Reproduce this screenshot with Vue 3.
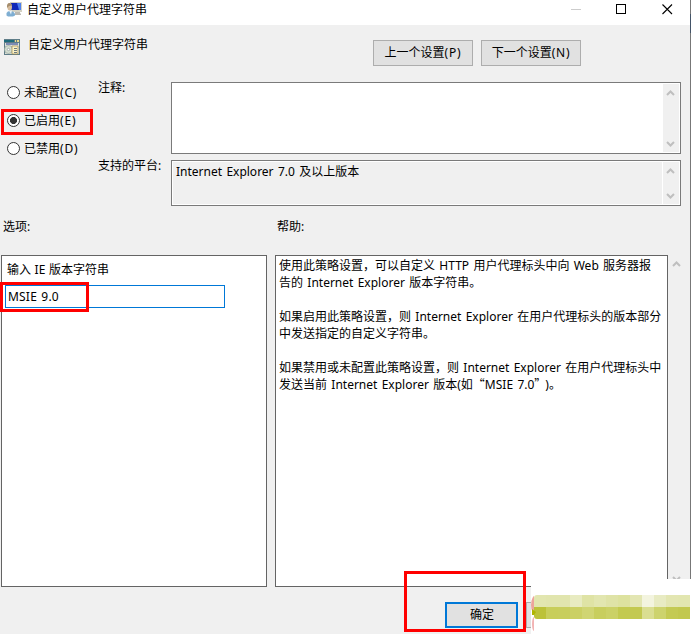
<script setup>
import { ref } from 'vue'

const state = ref('E')
const version = ref('MSIE 9.0')
const states = [
  { key: 'C', label: '未配置' },
  { key: 'E', label: '已启用' },
  { key: 'D', label: '已禁用' },
]
const help = [
  '使用此策略设置，可以自定义 HTTP 用户代理标头中向 Web 服务器报',
  '告的 Internet Explorer 版本字符串。',
  '',
  '如果启用此策略设置，则 Internet Explorer 在用户代理标头的版本部分',
  '中发送指定的自定义字符串。',
  '',
  '如果禁用或未配置此策略设置，则 Internet Explorer 在用户代理标头中',
]
const mosaicTop = ['#e2e6b0', '#e1e5ae', '#e1e5ae', '#e8ebc1', '#dfe3a5', '#e2e6b0', '#dfe3a7', '#dde29f', '#e3e6b3', '#f3f4df', '#e8ebc3', '#e3e6b2', '#e2e6b0']
const mosaicBottom = ['#bcc239', '#c8ce5b', '#c8ce5d', '#cbd064', '#d0d573', '#c8ce5e', '#cbd166', '#c3ca50', '#c3c951', '#dade91', '#cdd36d', '#c4ca53', '#c2c84e']
</script>

<template>
  <div class="window">
    <header class="titlebar">
      <svg class="app-icon" width="18" height="18" viewBox="0 0 18 18">
        <path d="M5 2h12v10H5z" fill="#d3d1c4" />
        <path d="M6 3h10v7H6z" fill="#1028b8" />
        <path d="M12 3h4v7h-2z" fill="#4d7ff0" />
        <path d="M10 12h5v1.500h1V15H9v-1h1z" fill="#b9b8b2" />
        <path d="M1.500 15.500V13q1-2 3.500-2 4 0 5 3v1.500l-2 1H3z" fill="#7faed2" />
        <path d="M4 10.500h3l-1 4z" fill="#e9f4fb" />
        <ellipse cx="4.700" cy="7" rx="2.300" ry="3.500" fill="#d5bb9c" />
        <path d="M2 8q-.5-5 2.500-5 2.500 0 2.500 2.500L4 6z" fill="#a58d6d" />
      </svg>
      <span class="title">自定义用户代理字符串</span>
      <svg class="controls" width="110" height="20" viewBox="0 0 110 20" fill="none" shape-rendering="crispEdges">
        <path d="M0 9.5h10" stroke="#ccc" />
        <rect x="45.5" y="4.5" width="9" height="9" stroke="#000" />
        <path d="M91.500 4.500l9.500 9.500m0-9.500l-9.500 9.500" stroke="#000" shape-rendering="auto" stroke-width="1.1" />
      </svg>
    </header>

    <section class="heading">
      <svg class="policy-icon" width="16" height="16" viewBox="0 0 16 16">
        <path d="M0 0h16v16H0z" fill="#5f7d88" />
        <path d="M1 4h14v11H1z" fill="#dfe1d8" />
        <path d="M0 1h10v2H0z" fill="#1d6b7c" />
        <path d="M11 1h1v2h-1zM13 1h2v2h-2z" fill="#e8d88a" />
        <path d="M2 4h12v2H2z" fill="#7c8cb4" />
        <circle cx="4.5" cy="10.5" r="4" fill="#d3ddd0" stroke="#8b9e98" stroke-width=".6" />
        <circle cx="4.5" cy="10.5" r="1.2" fill="#fff" stroke="#7e8b8b" stroke-width=".6" />
        <path d="M8 7h6v8H8z" fill="#fbf1c4" stroke="#a08a50" stroke-width=".7" />
        <path d="M10 9.500h3M10 11.500h3M10 13.500h3" stroke="#6d7b80" />
      </svg>
      <span class="policy-name">自定义用户代理字符串</span>
      <button class="btn">上一个设置<span class="key">(P)</span></button>
      <button class="btn">下一个设置<span class="key">(N)</span></button>
    </section>

    <section class="config">
      <div class="radios">
        <label v-for="s in states" :key="s.key" class="radio" @click="state = s.key">
          <i class="dot" :class="{ on: state === s.key }"></i>
          <span>{{ s.label }}<span class="key">({{ s.key }})</span></span>
        </label>
        <div class="mark mark-radio"></div>
      </div>
      <div class="labels">
        <span class="label-note">注释:</span>
        <span>支持的平台:</span>
      </div>
      <div class="fields">
        <div class="area note">
          <div class="scroll">
            <svg width="9" height="6" viewBox="0 0 9 6"><path d="M1 5l3.5-3.5L8 5" /></svg>
            <svg width="9" height="6" viewBox="0 0 9 6"><path d="M1 1l3.5 3.5L8 1" /></svg>
          </div>
        </div>
        <div class="area platform">
          <span class="platform-text">Internet Explorer 7.0 及以上版本</span>
          <div class="scroll">
            <svg width="9" height="6" viewBox="0 0 9 6"><path d="M1 5l3.5-3.5L8 5" /></svg>
            <svg width="9" height="6" viewBox="0 0 9 6"><path d="M1 1l3.5 3.5L8 1" /></svg>
          </div>
        </div>
      </div>
    </section>

    <section class="captions"><span>选项:</span><span>帮助:</span></section>

    <section class="panels">
      <div class="panel options">
        <div class="option-label">输入 IE 版本字符串</div>
        <input v-model="version" class="version" type="text" />
        <div class="mark mark-version"></div>
      </div>
      <div class="panel help">
        <div v-for="(line, i) in help" :key="i" class="line">{{ line }}</div>
        <div class="line">发送当前 Internet Explorer 版本(如<span class="quote">“</span>MSIE 7.0<span class="quote close">”</span>)。</div>
      </div>
      <div class="help-scroll">
        <svg width="9" height="6" viewBox="0 0 9 6"><path d="M1 5l3.5-3.5L8 5" /></svg>
        <svg width="9" height="6" viewBox="0 0 9 6"><path d="M1 1l3.5 3.5L8 1" /></svg>
      </div>
    </section>

    <footer class="footer">
      <button class="btn ok">确定</button>
      <div class="btn next"></div>
      <div class="mark mark-ok"></div>
    </footer>

    <div class="edge"></div>
    <div class="cover">
      <svg class="blot" width="3" height="38" viewBox="0 0 3 38">
        <ellipse cx="5" cy="10" rx="5" ry="10" fill="#eda49c" />
        <ellipse cx="3" cy="29" rx="2" ry="7" fill="#f2b3b3" />
      </svg>
      <div class="mosaic">
        <i v-for="(c, i) in mosaicTop" :key="'t' + i" :style="{ background: c }"></i>
        <i v-for="(c, i) in mosaicBottom" :key="'b' + i" :style="{ background: c }"></i>
      </div>
      <svg class="leaf" width="4" height="7" viewBox="0 0 4 7"><path d="M0 0l4 3-2 3H0z" fill="#b0b600" /></svg>
    </div>
  </div>
</template>

<style>
body { margin: 0; overflow: hidden; }
</style>

<style scoped>
* { box-sizing: border-box; }
.window {
  position: relative;
  display: flex;
  flex-direction: column;
  width: 691px;
  height: 634px;
  overflow: hidden;
  background: #f0f0f0;
  color: #000;
  font: 12px/17px "Noto Sans", "Noto Sans CJK SC", sans-serif;
  word-spacing: 1.2px;
  white-space: nowrap;
}
.titlebar { display: flex; height: 25px; background: #fff; padding-left: 5px; }
.title { margin: 1px 0 0 4px; }
.controls { margin: 0 10px 0 auto; }
.heading { display: flex; height: 57px; padding-left: 4px; }
.policy-icon { margin-top: 14px; }
.policy-name { margin: 11px 0 0 8px; width: 345px; }
.btn {
  width: 100px;
  height: 26px;
  margin: 15px 8px 0 0;
  padding: 0;
  border: 1px solid #adadad;
  background: #e1e1e1;
  color: #000;
  font: inherit;
  line-height: 22px;
}
.key { letter-spacing: .8px; }
.quote { font-family: "Noto Sans CJK SC", sans-serif; line-height: 0; }
.close { margin-right: 5px; }
.config { display: flex; height: 124px; }
.radios { position: relative; width: 97px; padding: 2px 0 0 7px; }
.radio { display: flex; align-items: center; gap: 4px; height: 17px; margin-bottom: 11px; }
.dot { width: 13px; height: 13px; border: 1px solid #333; border-radius: 50%; background: #fff; }
.dot.on { background: radial-gradient(circle, #333 3.2px, #fff 3.8px); }
.mark { position: absolute; border: 3px solid #f00; pointer-events: none; }
.mark-radio { left: 1px; top: 27px; width: 92px; height: 26px; }
.labels { display: flex; flex-direction: column; width: 74px; padding-left: 1px; }
.label-note { margin: -3px 0 61px; }
.fields { display: flex; flex-direction: column; gap: 6px; width: 510px; }
.area { display: flex; border: 1px solid #7a7a7a; padding: 1px; }
.note { height: 72px; background: #fff; }
.platform { height: 46px; box-shadow: inset 0 0 0 1px #fff; }
.platform-text { padding: 1px 0 0 3px; }
.scroll {
  display: flex;
  flex-direction: column;
  align-items: flex-start;
  justify-content: space-between;
  width: 16px;
  margin-left: auto;
  padding: 6px 0 5px 3px;
  background: #f0f0f0;
}
.platform .scroll { width: 17px; border-left: 1px solid #fff; }
svg { flex: none; display: block; }
.scroll path, .help-scroll path { fill: none; stroke: #bfbfbf; stroke-width: 2; }
.captions { display: flex; height: 49px; padding: 12px 0 0 3px; }
.captions span { width: 274px; }
.panels { display: flex; height: 332px; padding-left: 1px; }
.panel { border: 1px solid #646464; background: #fff; }
.options { position: relative; width: 266px; margin-right: 8px; padding: 5px 0 0 3px; }
.option-label { padding-left: 2px; word-spacing: .5px; }
.version {
  display: block;
  width: 220px;
  height: 23px;
  margin-top: 7px;
  padding: 0 0 0 2px;
  border: 1px solid #0078d7;
  outline: none;
  background: #fff;
  color: #000;
  font: inherit;
  letter-spacing: .2px;
  word-spacing: 1px;
}
.mark-version { left: -2px; top: 26px; width: 89px; height: 30px; }
.help { width: 393px; padding: 1px 0 0 3px; }
.line { height: 17px; }
.help-scroll { display: flex; flex-direction: column; justify-content: space-between; padding: 6px 0 5px 4px; }
.footer { position: relative; display: flex; height: 47px; padding-left: 445px; }
.ok { width: 73px; padding-left: 1px; border: 2px solid #0078d7; line-height: 20px; }
.mark-ok { left: 404px; top: -16px; width: 122px; height: 61px; }
.edge {
  position: absolute;
  left: 690px;
  top: 0;
  width: 1px;
  height: 579px;
  background: linear-gradient(#777 14px, #435468 14px, #435468 33px, #777 33px);
}
.cover { position: absolute; left: 531px; top: 579px; width: 160px; height: 55px; background: #fff; }
.blot { position: absolute; left: 0; top: 16px; }
.leaf { position: absolute; left: 1px; top: 30px; }
.mosaic {
  position: absolute;
  left: 3px;
  top: 16px;
  display: grid;
  grid-template-columns: repeat(13, 12px);
  grid-template-rows: 12px 12px;
  border-radius: 3px 0 0 3px;
  overflow: hidden;
}
</style>
